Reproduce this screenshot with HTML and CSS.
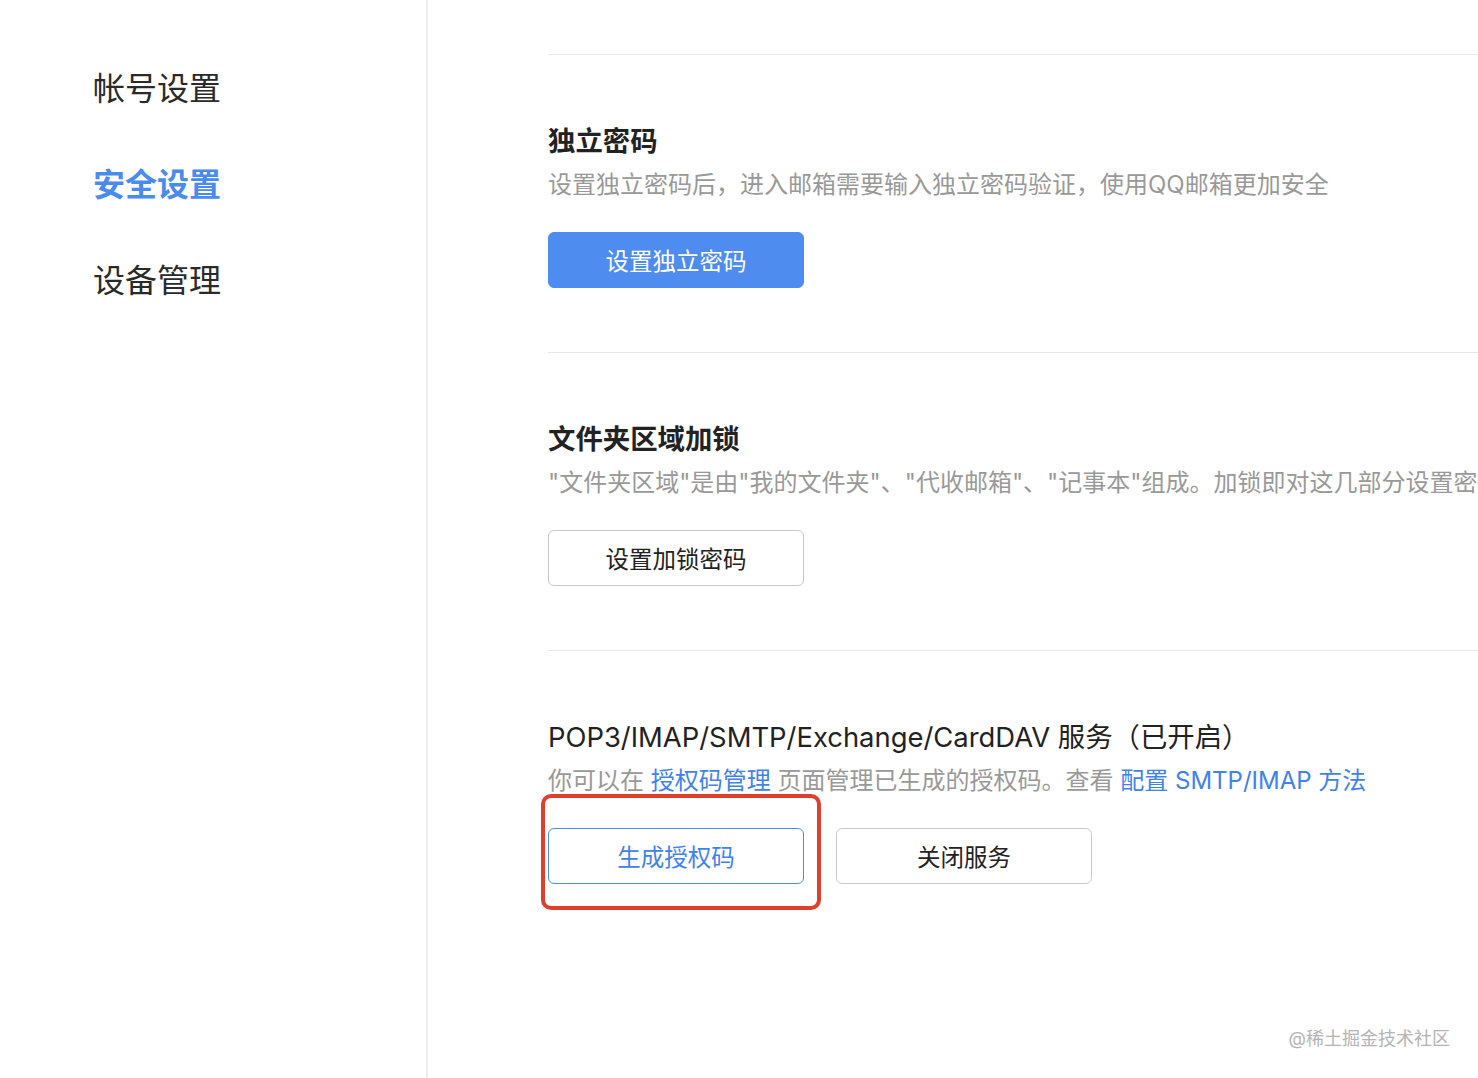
FILE: index.html
```html
<!DOCTYPE html>
<html lang="zh-CN">
<head>
<meta charset="utf-8">
<title>安全设置</title>
<link rel="stylesheet" href="styles.css">
</head>
<body>
<div class="page">
  <aside class="sidebar">
    <div class="nav-item">帐号设置</div>
    <div class="nav-item active">安全设置</div>
    <div class="nav-item">设备管理</div>
  </aside>
  <main class="main">
    <section class="section">
      <h2 class="title bold">独立密码</h2>
      <p class="desc">设置独立密码后，进入邮箱需要输入独立密码验证，使用QQ邮箱更加安全</p>
      <div class="actions">
        <button class="btn btn-primary">设置独立密码</button>
      </div>
    </section>
    <section class="section">
      <h2 class="title bold">文件夹区域加锁</h2>
      <p class="desc">"文件夹区域"是由"我的文件夹"、"代收邮箱"、"记事本"组成。加锁即对这几部分设置密码，进入这几部分时需要验证</p>
      <div class="actions">
        <button class="btn">设置加锁密码</button>
      </div>
    </section>
    <section class="section">
      <h2 class="title">POP3/IMAP/SMTP/Exchange/CardDAV 服务（已开启）</h2>
      <p class="desc">你可以在 <a class="link">授权码管理</a> 页面管理已生成的授权码。查看 <a class="link">配置 SMTP/IMAP 方法</a></p>
      <div class="actions">
        <div class="highlight-wrap">
          <button class="btn btn-outline">生成授权码</button>
          <span class="highlight"></span>
        </div>
        <button class="btn">关闭服务</button>
      </div>
    </section>
  </main>
  <div class="watermark">@稀土掘金技术社区</div>
</div>
</body>
</html>
```
FILE: styles.css
```css
* { box-sizing: border-box; }
html, body {
  margin: 0;
  padding: 0;
  background: #fff;
  height: 100%;
  overflow: hidden;
}
body {
  font-family: "Inter", "Noto Sans CJK SC", "Noto Sans", sans-serif;
  color: #222;
}
.page {
  display: flex;
  height: 1078px;
  position: relative;
  overflow: hidden;
}
.sidebar {
  width: 428px;
  flex: none;
  border-right: 2px solid #ececec;
  padding-top: 41px;
  padding-left: 93px;
  display: flex;
  flex-direction: column;
}
.nav-item {
  height: 96px;
  line-height: 96px;
  font-size: 32px;
  color: #2a2a2a;
}
.nav-item.active {
  color: #4a8bef;
  font-weight: 700;
}
.main {
  flex: 1;
  padding-top: 54px;
  padding-left: 120px;
  min-width: 0;
}
.section {
  border-top: 1.5px solid #e8e8e8;
  padding-top: 66px;
  height: 298px;
  white-space: nowrap;
}
.title {
  margin: 0;
  font-size: 27.4px;
  line-height: 40px;
  font-weight: 400;
  color: #222;
}
.title.bold { font-weight: 700; }
.desc {
  margin: 6px 0 0;
  font-size: 24px;
  line-height: 36px;
  color: #999;
}
.link {
  color: #3f82ea;
  text-decoration: none;
}
.actions {
  margin-top: 29px;
  display: flex;
  gap: 32px;
}
.btn {
  width: 256px;
  height: 56px;
  border-radius: 6px;
  border: 1.5px solid #c9c9c9;
  background: #fff;
  font-family: inherit;
  font-size: 23.5px;
  color: #222;
  padding: 0;
}
.btn-primary {
  background: #4e8cf0;
  border-color: #4e8cf0;
  color: #fff;
}
.btn-outline {
  border-color: #4e8cf0;
  color: #3f82ea;
}
.highlight-wrap {
  position: relative;
  display: flex;
}
.highlight {
  position: absolute;
  left: -7px;
  top: -34px;
  right: -17px;
  bottom: -26px;
  border: 4px solid #e0402b;
  border-radius: 10px;
  pointer-events: none;
}
.watermark {
  position: absolute;
  right: 28px;
  bottom: 28px;
  font-size: 18px;
  color: #b4b4b4;
}
```
